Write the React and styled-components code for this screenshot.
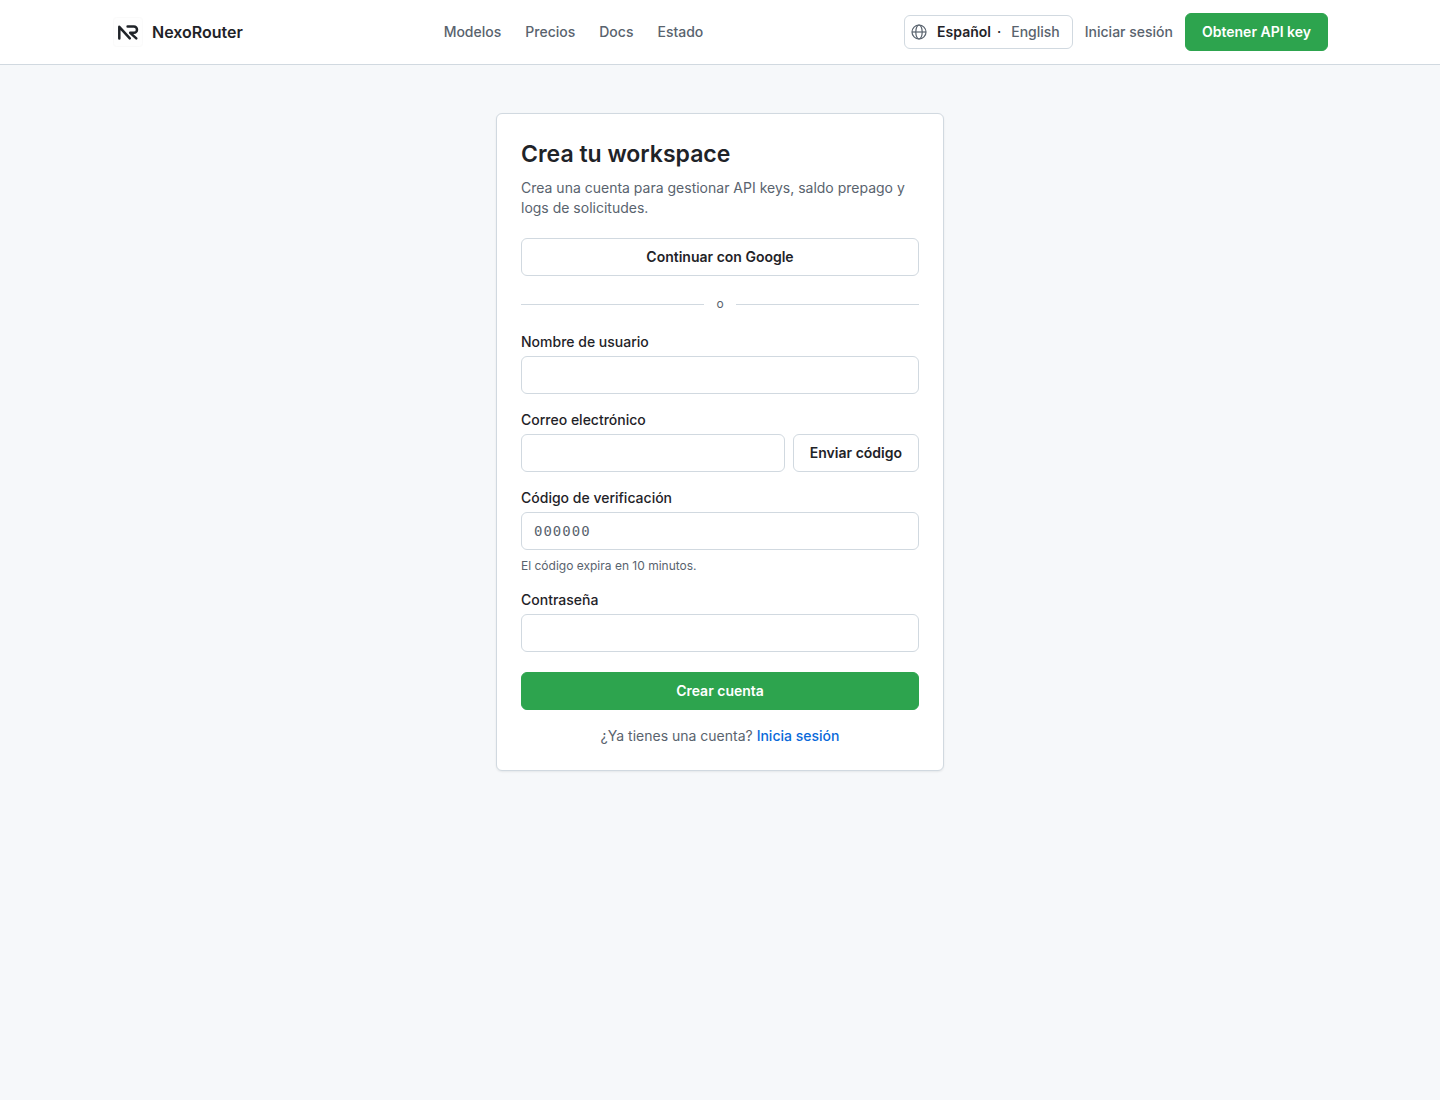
import styled, { createGlobalStyle } from "styled-components";

const NAV_LINKS = ["Modelos", "Precios", "Docs", "Estado"];

const App = () => {
  return (
    <>
      <GlobalStyle />
      <Header>
        <HeaderInner>
          <Brand href="#">
            <Logo />
            NexoRouter
          </Brand>
          <Nav>
            {NAV_LINKS.map((label) => (
              <NavLink key={label} href="#">
                {label}
              </NavLink>
            ))}
          </Nav>
          <Actions>
            <LanguageSwitch>
              <GlobeIcon />
              <LanguageLink href="#" $active>
                Español
              </LanguageLink>
              <Dot>·</Dot>
              <LanguageLink href="#">English</LanguageLink>
            </LanguageSwitch>
            <NavLink href="#">Iniciar sesión</NavLink>
            <Button type="button" $primary>
              Obtener API key
            </Button>
          </Actions>
        </HeaderInner>
      </Header>
      <Main>
        <Card>
          <Title>Crea tu workspace</Title>
          <Description>
            Crea una cuenta para gestionar API keys, saldo prepago y logs de
            solicitudes.
          </Description>
          <Button type="button">Continuar con Google</Button>
          <Divider>o</Divider>
          <Form onSubmit={(e) => e.preventDefault()}>
            <Field>
              <Label htmlFor="username">Nombre de usuario</Label>
              <Input id="username" type="text" />
            </Field>
            <Field>
              <Label htmlFor="email">Correo electrónico</Label>
              <InputRow>
                <Input id="email" type="email" />
                <Button type="button">Enviar código</Button>
              </InputRow>
            </Field>
            <Field>
              <Label htmlFor="code">Código de verificación</Label>
              <CodeInput id="code" type="text" placeholder="000000" />
              <Hint>El código expira en 10 minutos.</Hint>
            </Field>
            <Field>
              <Label htmlFor="password">Contraseña</Label>
              <Input id="password" type="password" />
            </Field>
            <SubmitButton type="submit" $primary>
              Crear cuenta
            </SubmitButton>
          </Form>
          <Footer>
            ¿Ya tienes una cuenta? <FooterLink href="#">Inicia sesión</FooterLink>
          </Footer>
        </Card>
      </Main>
    </>
  );
};

export default App;

const Logo = () => (
  <svg width="32" height="32" viewBox="0 0 32 32" fill="none" aria-hidden="true">
    <rect x="1.5" y="1.5" width="29" height="29" rx="3" fill="#fefefe" stroke="#fafafa" />
    <g stroke="#1f2328" strokeWidth="2.5" strokeLinecap="round" strokeLinejoin="round">
      <path d="M7.3 22.4V10.8L17.8 22.4" />
      <path d="M15.6 10.6h6.3a3.1 3.1 0 0 1 0 6.2h-3.7l6.1 5.6" />
    </g>
  </svg>
);

const GlobeIcon = () => (
  <svg width="16" height="16" viewBox="0 0 16 16" fill="none" stroke="#59636e" strokeWidth="1.2" aria-hidden="true">
    <circle cx="8" cy="8" r="7" />
    <ellipse cx="8" cy="8" rx="3.2" ry="7" />
    <path d="M1 8h14" />
  </svg>
);

const GlobalStyle = createGlobalStyle`
  * {
    box-sizing: border-box;
  }

  body {
    margin: 0;
    background: #f6f8fa;
    color: #1f2328;
    font-family: Inter, "Liberation Sans", sans-serif;
    font-size: 14px;
    line-height: 20px;
    -webkit-font-smoothing: antialiased;
  }

  a {
    color: inherit;
    text-decoration: none;
  }
`;

const Header = styled.header`
  background: #ffffff;
  border-bottom: 1px solid #d1d9e0;
`;

const HeaderInner = styled.div`
  display: flex;
  align-items: center;
  justify-content: space-between;
  max-width: 1280px;
  height: 64px;
  margin: 0 auto;
  padding: 0 32px;
`;

const Brand = styled.a`
  display: flex;
  align-items: center;
  gap: 8px;
  font-size: 16px;
  font-weight: 600;
`;

const Nav = styled.nav`
  display: flex;
  gap: 24px;
`;

const NavLink = styled.a`
  color: #59636e;
  font-weight: 500;
`;

const Actions = styled.div`
  display: flex;
  align-items: center;
  gap: 12px;
`;

const LanguageSwitch = styled.div`
  display: flex;
  align-items: center;
  height: 34px;
  padding: 0 6px;
  border: 1px solid #d1d9e0;
  border-radius: 6px;

  svg {
    margin-right: 4px;
  }
`;

const LanguageLink = styled.a`
  padding: 0 6px;
  color: ${({ $active }) => ($active ? "#1f2328" : "#59636e")};
  font-weight: ${({ $active }) => ($active ? 600 : 500)};
`;

const Dot = styled.span`
  margin-right: 4px;
  font-weight: 500;
`;

const Button = styled.button`
  height: 38px;
  padding: 0 16px;
  border: 1px solid ${({ $primary }) => ($primary ? "#2da44e" : "#d1d9e0")};
  border-radius: 6px;
  background: ${({ $primary }) => ($primary ? "#2da44e" : "#ffffff")};
  color: ${({ $primary }) => ($primary ? "#ffffff" : "#1f2328")};
  font: inherit;
  font-weight: 600;
  white-space: nowrap;
  cursor: pointer;
`;

const SubmitButton = styled(Button)`
  margin-top: 4px;
`;

const Main = styled.main`
  padding: 48px 16px;
`;

const Card = styled.section`
  display: flex;
  flex-direction: column;
  max-width: 448px;
  margin: 0 auto;
  padding: 24px;
  border: 1px solid #d1d9e0;
  border-radius: 6px;
  background: #ffffff;
  box-shadow: 0 1px 2px rgba(31, 35, 40, 0.08);
`;

const Title = styled.h1`
  margin: 0;
  font-size: 23px;
  font-weight: 600;
  line-height: 32px;
`;

const Description = styled.p`
  margin: 8px 0 20px;
  color: #59636e;
`;

const Divider = styled.div`
  display: flex;
  align-items: center;
  gap: 12px;
  margin: 20px 0;
  color: #59636e;
  font-size: 12px;
  line-height: 16px;

  &::before,
  &::after {
    content: "";
    flex: 1;
    height: 1px;
    background: #d1d9e0;
  }
`;

const Form = styled.form`
  display: flex;
  flex-direction: column;
  gap: 16px;
`;

const Field = styled.div`
  display: flex;
  flex-direction: column;
`;

const Label = styled.label`
  margin-bottom: 4px;
  font-weight: 500;
`;

const InputRow = styled.div`
  display: flex;
  gap: 8px;
`;

const Input = styled.input`
  flex: 1;
  min-width: 0;
  min-height: 38px;
  padding: 0 12px;
  border: 1px solid #d1d9e0;
  border-radius: 6px;
  background: #ffffff;
  color: inherit;
  font: inherit;
`;

const CodeInput = styled(Input)`
  font-family: "DejaVu Sans Mono", monospace;
  letter-spacing: 1px;

  &::placeholder {
    color: #59636e;
  }
`;

const Hint = styled.p`
  margin: 8px 0 0;
  color: #59636e;
  font-size: 12px;
  line-height: 16px;
`;

const Footer = styled.p`
  margin: 16px 0 0;
  color: #59636e;
  text-align: center;
`;

const FooterLink = styled.a`
  color: #0969da;
  font-weight: 500;
`;
